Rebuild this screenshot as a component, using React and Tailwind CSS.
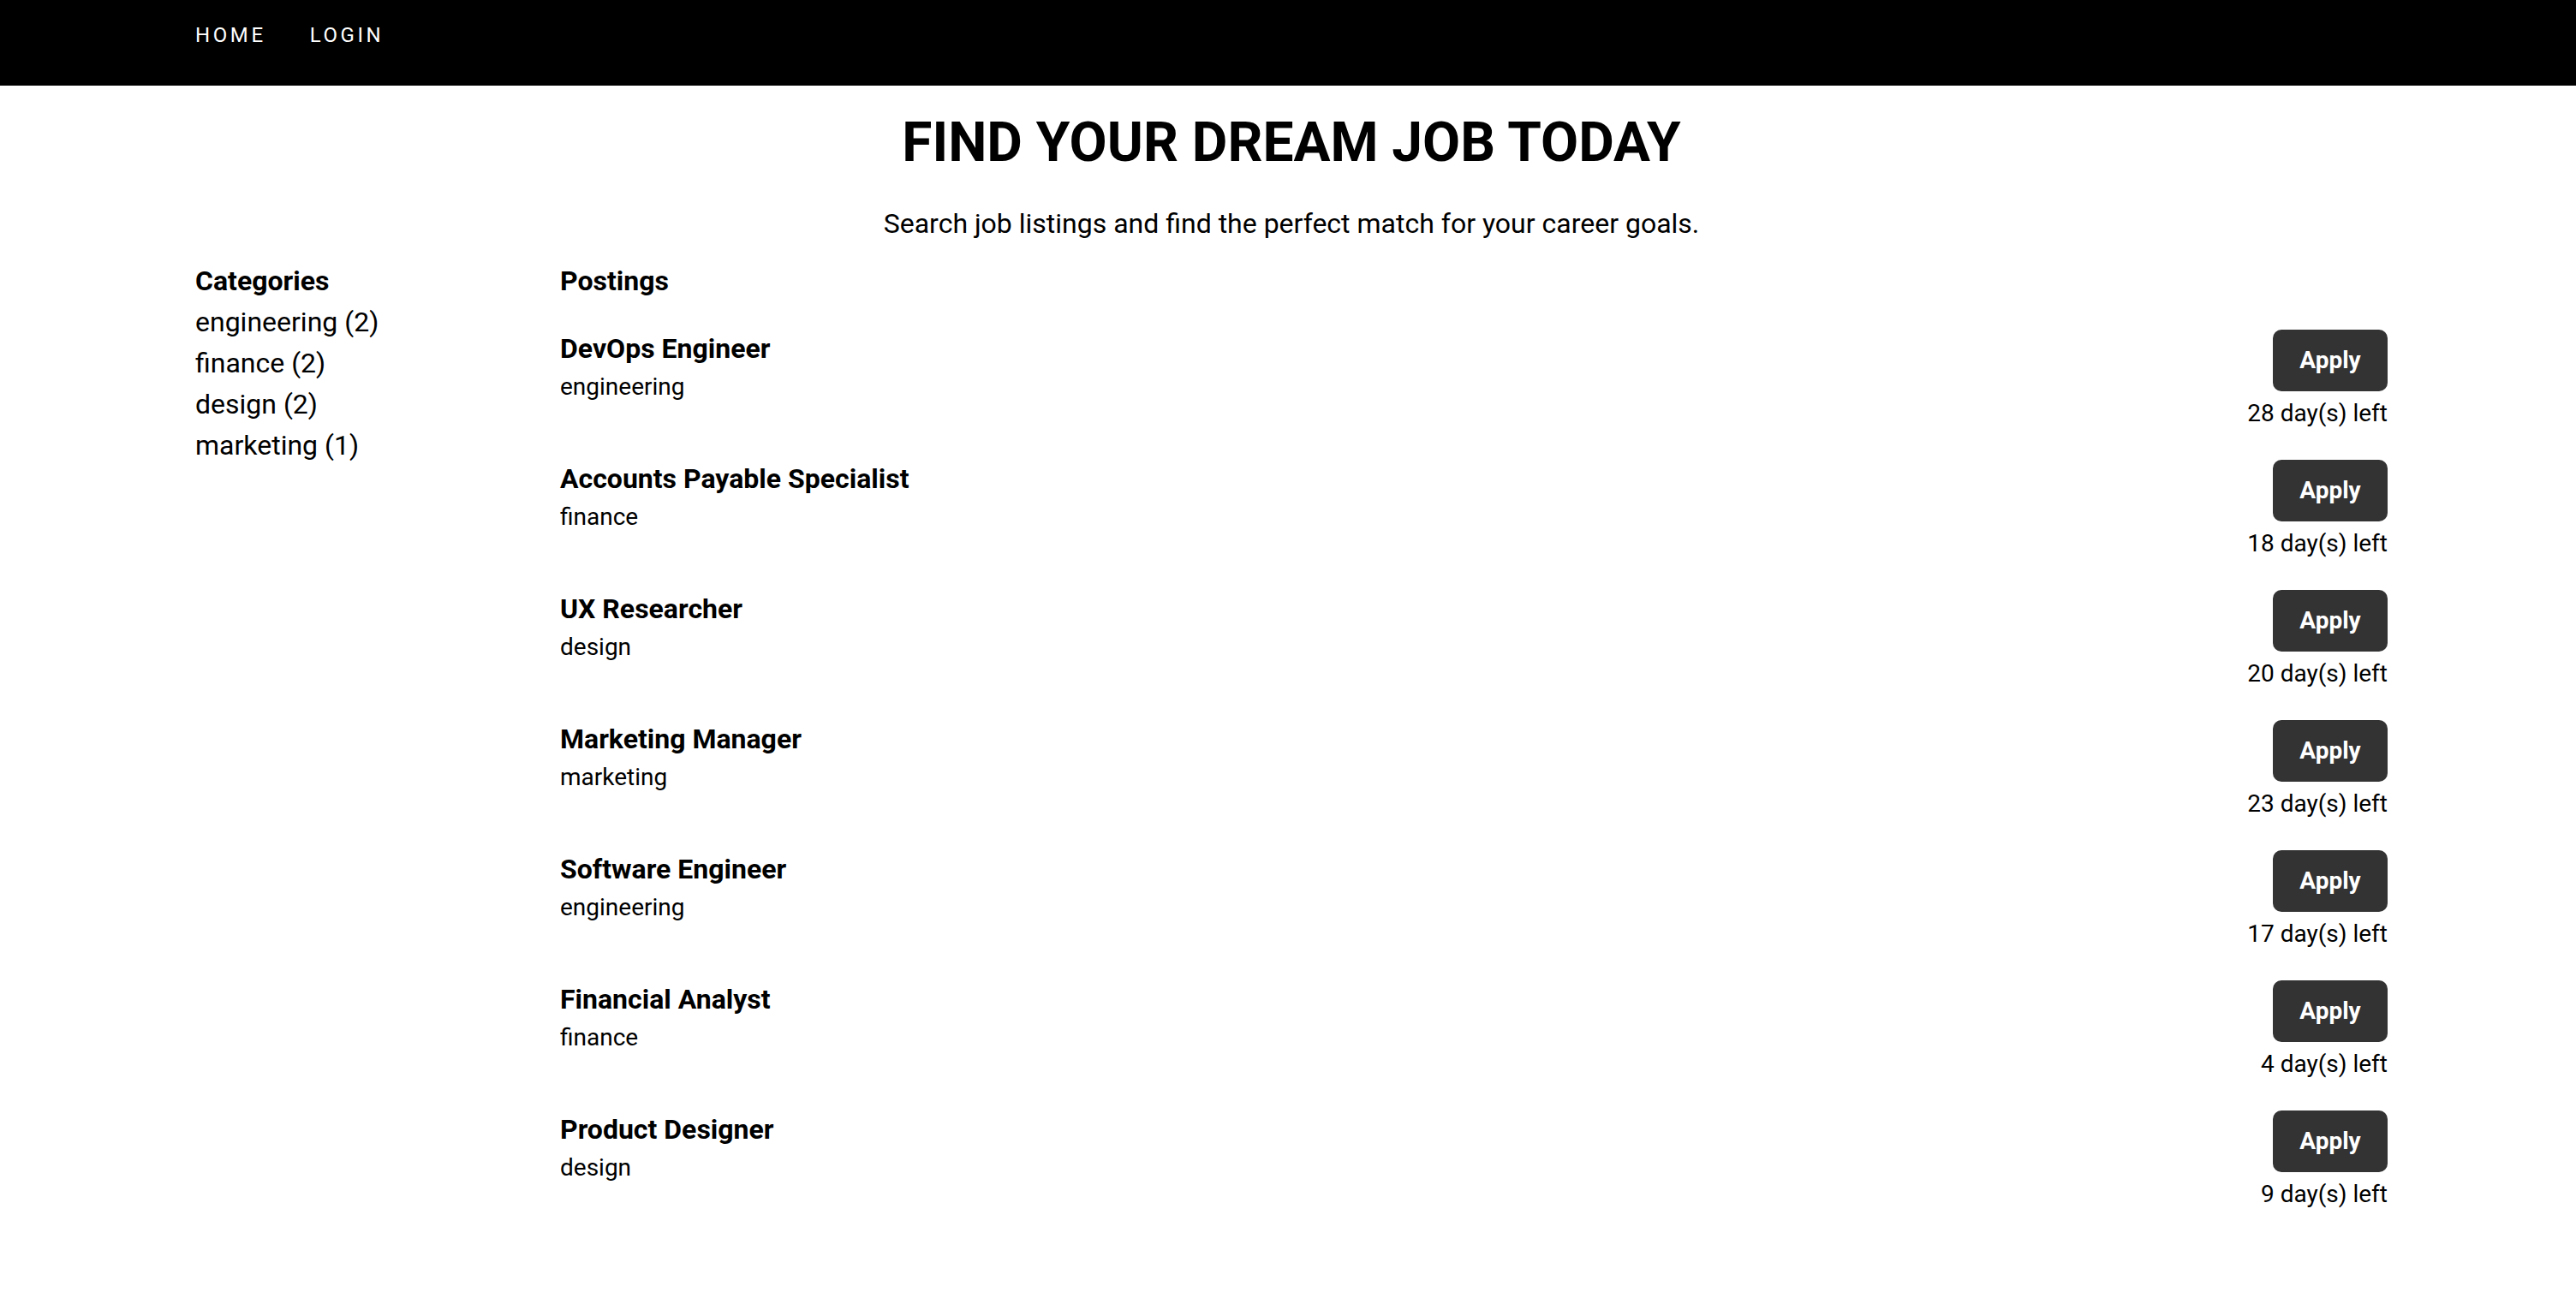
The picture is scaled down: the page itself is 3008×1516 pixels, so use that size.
import React from "react";

const CATEGORIES = [
  { name: "engineering", count: 2 },
  { name: "finance", count: 2 },
  { name: "design", count: 2 },
  { name: "marketing", count: 1 },
];

const POSTINGS = [
  { title: "DevOps Engineer", category: "engineering", days: 28 },
  { title: "Accounts Payable Specialist", category: "finance", days: 18 },
  { title: "UX Researcher", category: "design", days: 20 },
  { title: "Marketing Manager", category: "marketing", days: 23 },
  { title: "Software Engineer", category: "engineering", days: 17 },
  { title: "Financial Analyst", category: "finance", days: 4 },
  { title: "Product Designer", category: "design", days: 9 },
];

const NavBar = () => {
  return (
    <nav className="h-[100px] bg-black">
      <div className="mx-auto flex w-[2560px] gap-[51px] pl-[4px] pt-[27px]">
        <a href="#" className="text-[24px] leading-[28px] tracking-[0.15em] text-white">
          HOME
        </a>
        <a href="#" className="text-[24px] leading-[28px] tracking-[0.15em] text-white">
          LOGIN
        </a>
      </div>
    </nav>
  );
};

const PostingRow = ({ posting }) => {
  return (
    <div className="flex items-start justify-between">
      <div className="flex flex-col">
        <h3 className="text-[32px] font-bold leading-[48px]">{posting.title}</h3>
        <span className="text-[28px] leading-[42px]">{posting.category}</span>
      </div>
      <div className="flex flex-col items-end">
        <button className="mt-[2px] flex h-[72px] w-[134px] items-center justify-center rounded-[10px] bg-[#333333] text-[28px] font-bold text-white">
          Apply
        </button>
        <span className="mt-[5px] text-[28px] leading-[42px]">{posting.days} day(s) left</span>
      </div>
    </div>
  );
};

const App = () => {
  return (
    <main className="min-h-screen bg-white font-['Roboto','Liberation_Sans',sans-serif] text-black">
      <NavBar />
      <div className="pl-[8px]">
        <h1 className="mt-[29px] text-center text-[64px] font-bold leading-[76px]">
          FIND YOUR DREAM JOB TODAY
        </h1>
        <p className="mt-[32px] text-center text-[32px] leading-[48px]">
          Search job listings and find the perfect match for your career goals.
        </p>
        <div className="mx-auto mt-[19px] flex w-[2560px]">
          <aside className="w-[426px] shrink-0">
            <h2 className="text-[32px] font-bold leading-[48px]">Categories</h2>
            <ul>
              {CATEGORIES.map((cat) => (
                <li key={cat.name} className="text-[32px] leading-[48px]">
                  {cat.name} ({cat.count})
                </li>
              ))}
            </ul>
          </aside>
          <section className="flex-1">
            <h2 className="text-[32px] font-bold leading-[48px]">Postings</h2>
            <div className="mt-[31px] flex flex-col gap-[31px]">
              {POSTINGS.map((p) => (
                <PostingRow posting={p} key={p.title} />
              ))}
            </div>
          </section>
        </div>
      </div>
    </main>
  );
};

export default App;
